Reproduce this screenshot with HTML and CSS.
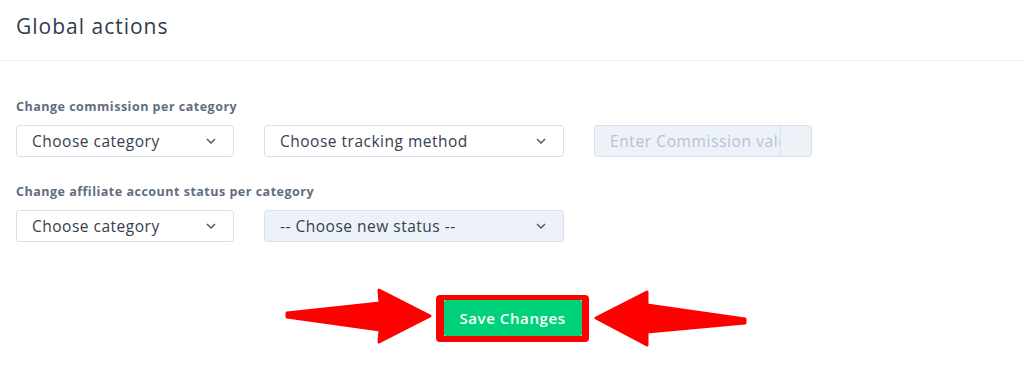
FILE: index.html
```html
<!DOCTYPE html>
<html lang="en">
<head>
    <meta charset="UTF-8">
    <meta name="viewport" content="width=device-width, initial-scale=1.0">
    <title>Global actions</title>
    <link rel="stylesheet" href="styles.css">
</head>
<body>

<div class="card">
    <div class="card-header">
        <h2>Global actions</h2>
    </div>

    <div class="card-body">
        <div class="form-group">
            <label>Change commission per category</label>
            <div class="form-row">
                <div class="select small">
                    <span>Choose category</span>
                    <svg class="chevron" viewBox="0 0 12 8"><path d="M2 2l4 4 4-4"/></svg>
                </div>
                <div class="select wide">
                    <span>Choose tracking method</span>
                    <svg class="chevron" viewBox="0 0 12 8"><path d="M2 2l4 4 4-4"/></svg>
                </div>
                <div class="input-group">
                    <input type="text" placeholder="Enter Commission value" disabled>
                    <span class="addon"></span>
                </div>
            </div>
        </div>

        <div class="form-group">
            <label>Change affiliate account status per category</label>
            <div class="form-row">
                <div class="select small">
                    <span>Choose category</span>
                    <svg class="chevron" viewBox="0 0 12 8"><path d="M2 2l4 4 4-4"/></svg>
                </div>
                <div class="select wide disabled">
                    <span>-- Choose new status --</span>
                    <svg class="chevron" viewBox="0 0 12 8"><path d="M2 2l4 4 4-4"/></svg>
                </div>
            </div>
        </div>
    </div>

    <div class="card-footer">
        <div class="highlight">
            <button class="btn-save">Save Changes</button>
        </div>
    </div>
</div>

<!-- annotation arrows pointing at the save button -->
<svg class="arrows" viewBox="0 0 1024 376" width="1024" height="376">
    <polygon points="287,313 380,303 379,290 430,316 379,342 380,330 287,317"/>
    <polygon points="596,318 647,292 647,305 745,319 745,323 647,332 647,345"/>
</svg>

</body>
</html>
```

FILE: styles.css
```css
body {
    font-family: "Open Sans", Arial, sans-serif;
    margin: 0;
    padding: 0;
    background-color: #fff;
    color: #344050;
}

.card {
    width: 1024px;
    height: 376px;
}

.card-header {
    height: 61px;
    padding: 0 16px;
    display: flex;
    align-items: center;
    border-bottom: 1px solid #edf2f9;
    box-sizing: border-box;
}

.card-header h2 {
    margin: 0 0 8px;
    font-size: 21px;
    font-weight: 500;
    letter-spacing: 1px;
    color: #2f3b4c;
}

.card-body {
    padding: 38px 16px 0;
}

.form-group {
    margin-bottom: 27px;
}

label {
    display: block;
    font-size: 12.5px;
    font-weight: 700;
    letter-spacing: 0.5px;
    color: #5e6e82;
    margin-bottom: 10px;
    line-height: 16px;
}

.form-row {
    display: flex;
    gap: 30px;
}

.select {
    height: 32px;
    box-sizing: border-box;
    border: 1px solid #d8e2ef;
    border-radius: 3px;
    padding: 0 16px 0 15px;
    display: flex;
    align-items: center;
    justify-content: space-between;
    font-size: 15.5px;
    letter-spacing: 0.5px;
    color: #344050;
    background-color: #fff;
}

.select.small {
    width: 218px;
}

.select.wide {
    width: 300px;
}

.select.disabled {
    background-color: #edf2f9;
}

.chevron {
    width: 12px;
    height: 8px;
    fill: none;
    stroke: #4d5969;
    stroke-width: 1.5;
}

.input-group {
    width: 218px;
    height: 32px;
    display: flex;
    box-sizing: border-box;
    border: 1px solid #d8e2ef;
    border-radius: 3px;
    background-color: #edf2f9;
    overflow: hidden;
}

.input-group input {
    width: 186px;
    border: none;
    border-right: 1px solid #d8e2ef;
    background: transparent;
    padding: 0 0 0 15px;
    font-family: inherit;
    font-size: 15.5px;
    letter-spacing: 0.6px;
    box-sizing: border-box;
}

.input-group input::placeholder {
    color: #b6c1d2;
}

.addon {
    flex: 1;
}

.card-footer {
    display: flex;
    justify-content: center;
    padding-top: 26px;
}

.highlight {
    border: 7px solid #ff0000;
    border-left-width: 8px;
    border-top-width: 5px;
    border-bottom-width: 6px;
    border-radius: 4px;
}

.btn-save {
    display: block;
    width: 138px;
    height: 36px;
    border: none;
    border-radius: 2px;
    background-color: #00d27a;
    color: #fff;
    font-family: inherit;
    font-size: 15px;
    font-weight: 600;
    letter-spacing: 0.6px;
    padding: 0;
    cursor: pointer;
}

.arrows {
    position: absolute;
    left: 0;
    top: 0;
    pointer-events: none;
}

.arrows polygon {
    fill: #ff0000;
    stroke: #ff0000;
    stroke-width: 3;
    stroke-linejoin: round;
}
```
